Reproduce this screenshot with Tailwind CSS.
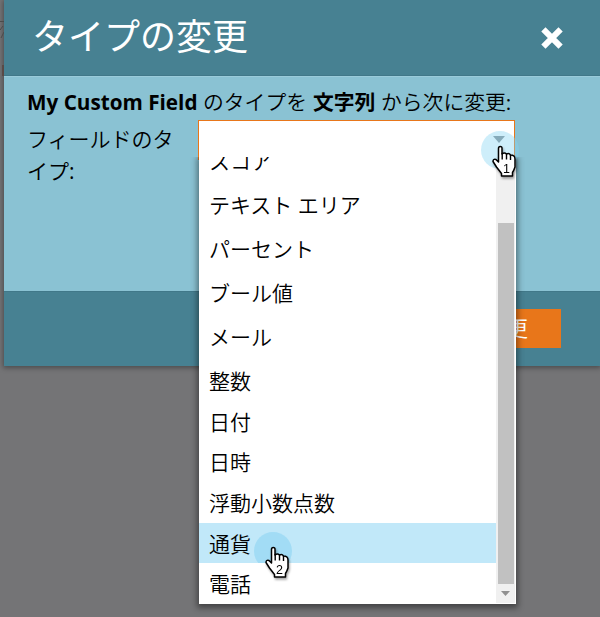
<!DOCTYPE html>
<html lang="ja">
<head>
<meta charset="utf-8">
<title>タイプの変更</title>
<script src="https://cdn.jsdelivr.net/npm/@tailwindcss/browser@4"></script>
</head>
<body class="relative h-[617px] w-[600px] overflow-hidden bg-[#747476] font-['Open_Sans','Noto_Sans_CJK_JP',sans-serif] text-black">
  <svg class="absolute top-[18px] left-0 h-[60px] w-[4px]" viewBox="0 0 4 60" fill="none"><path stroke="#4b4b4b" d="M0 3.500h4M0 12l3-4M1 20l3-6"/><path stroke="#59433e" stroke-width="1.5" d="M3 47v11"/></svg>

  <section class="ml-1 flex h-[366px] w-[595.5px] flex-col bg-[#8ac2d3] shadow-[0_1px_5px_1px_rgba(0,0,0,0.35)]">
    <header class="flex h-[76px] shrink-0 items-start justify-between border-b border-[#417889] bg-[#478192] pr-[37px] pl-[28px] text-white">
      <h1 class="mt-[11px] text-[36px] leading-[52px] font-normal whitespace-nowrap">タイプの変更</h1>
      <svg class="mt-[27px] h-[22px] w-[22px]" viewBox="0 0 22 22" fill="none" stroke="white" stroke-width="6"><path d="M2.400 2.400 19.600 19.600M19.600 2.400 2.400 19.600"/></svg>
    </header>
    <main class="flex-1 border-t border-[#9acbda] pt-[8px] pl-[23px] font-[350]">
      <p class="flex h-[34px] items-center text-[20.8px] leading-[33px] whitespace-nowrap">
        <b class="w-[176px] text-[20.700px] font-bold">My Custom Field</b>
        <span class="w-[110px]">のタイプを</span>
        <b class="w-[68px] font-bold">文字列</b>
        <span>から次に変更<span class="font-normal">:</span></span>
      </p>
      <div class="flex text-[21px]">
        <label class="w-[171px] pt-[4px] leading-[32px]">フィールドのタ<br>イプ<span class="font-normal">:</span></label>
        <div class="mt-px flex h-[40px] w-[317px] justify-end border border-[#e8761a] bg-white pt-[15px] pr-[9px]">
          <svg class="h-[7px] w-[12px]" viewBox="0 0 12 7"><path fill="#879095" d="M0 0h12L6 7z"/></svg>
        </div>
      </div>
    </main>
    <footer class="flex h-[75px] shrink-0 items-start justify-end border-t border-[#417889] bg-[#478192] pt-[17px] pr-[38.5px]">
      <button class="flex h-[39px] w-[84px] items-center justify-end rounded-none bg-[#e8761a] pr-[33px] text-[21px] font-normal whitespace-nowrap text-white">変更</button>
    </footer>
  </section>

  <div class="absolute top-[157px] left-[199px] flex h-[447px] w-[317px] bg-white shadow-[0_2px_6px_2px_rgba(0,0,0,0.42)] [clip-path:inset(0_-12px_-14px_-12px)]">
    <ul class="mb-px flex flex-1 flex-col justify-end overflow-hidden text-[21px] font-[350] whitespace-nowrap *:shrink-0 *:pl-[10px]">
      <li class="h-[44px] leading-[40px]">スコア</li>
      <li class="h-[44px] leading-[40px]">テキスト エリア</li>
      <li class="h-[44px] leading-[40px]">パーセント</li>
      <li class="h-[44px] leading-[40px]">ブール値</li>
      <li class="h-[44px] leading-[40px]">メール</li>
      <li class="h-[40.5px] leading-[40px]">整数</li>
      <li class="h-[40.5px] leading-[40px]">日付</li>
      <li class="h-[40.5px] leading-[40px]">日時</li>
      <li class="h-[40.5px] leading-[40px]">浮動小数点数</li>
      <li class="h-[40px] bg-[#c1e8f9] leading-[42px]">通貨</li>
      <li class="h-[40px] leading-[42px]">電話</li>
    </ul>
    <div class="mr-px mb-px flex w-[19px] flex-col items-center bg-[#f0f0f0] pt-[66px]">
      <div class="h-[361px] w-[16px] shrink-0 bg-[#c1c1c1]"></div>
      <svg class="mt-[7px] h-[5px] w-[9px] shrink-0" viewBox="0 0 9 5"><path fill="#909090" d="M0 0h9L4.500 5z"/></svg>
    </div>
  </div>

  <div class="absolute top-[131px] left-[481px] h-[38px] w-[38px] rounded-full bg-[#85d5f2]/40"></div>
  <svg class="absolute top-[145px] left-[491px] h-[34px] w-[27px] drop-shadow-[1px_2px_1px_rgba(0,0,0,0.35)]" viewBox="0 0 27 34">
    <path fill="white" stroke="black" stroke-width="1.500" stroke-linejoin="round" d="M7.500 17V3.500Q7.500 1.500 9.300 1.500T11 3.500V9Q13.500 7 15.500 9Q18 7.500 19.500 10Q24 10 24 14V22Q23 25 21.500 27.500V31H10.500V28.500L5.500 22 2 16.500Q2 13.500 5 14.500Z"/>
    <path stroke="black" stroke-width="1.400" d="M11.200 8v6.500M15.500 9v5.500M19.500 10v5"/>
    <text x="15.500" y="27.500" text-anchor="middle" font-family="Liberation Sans" font-size="12.500">1</text>
  </svg>
  <div class="absolute top-[532px] left-[254px] h-[38px] w-[38px] rounded-full bg-[#73cbef]/40 [clip-path:inset(0_0_7px_0)]"></div>
  <svg class="absolute top-[546px] left-[264px] h-[34px] w-[27px] drop-shadow-[1px_2px_1px_rgba(0,0,0,0.35)]" viewBox="0 0 27 34">
    <path fill="white" stroke="black" stroke-width="1.500" stroke-linejoin="round" d="M7.500 17V3.500Q7.500 1.500 9.300 1.500T11 3.500V9Q13.500 7 15.500 9Q18 7.500 19.500 10Q24 10 24 14V22Q23 25 21.500 27.500V31H10.500V28.500L5.500 22 2 16.500Q2 13.500 5 14.500Z"/>
    <path stroke="black" stroke-width="1.400" d="M11.200 8v6.500M15.500 9v5.500M19.500 10v5"/>
    <text x="15.500" y="27.500" text-anchor="middle" font-family="Liberation Sans" font-size="12.500">2</text>
  </svg>
</body>
</html>
